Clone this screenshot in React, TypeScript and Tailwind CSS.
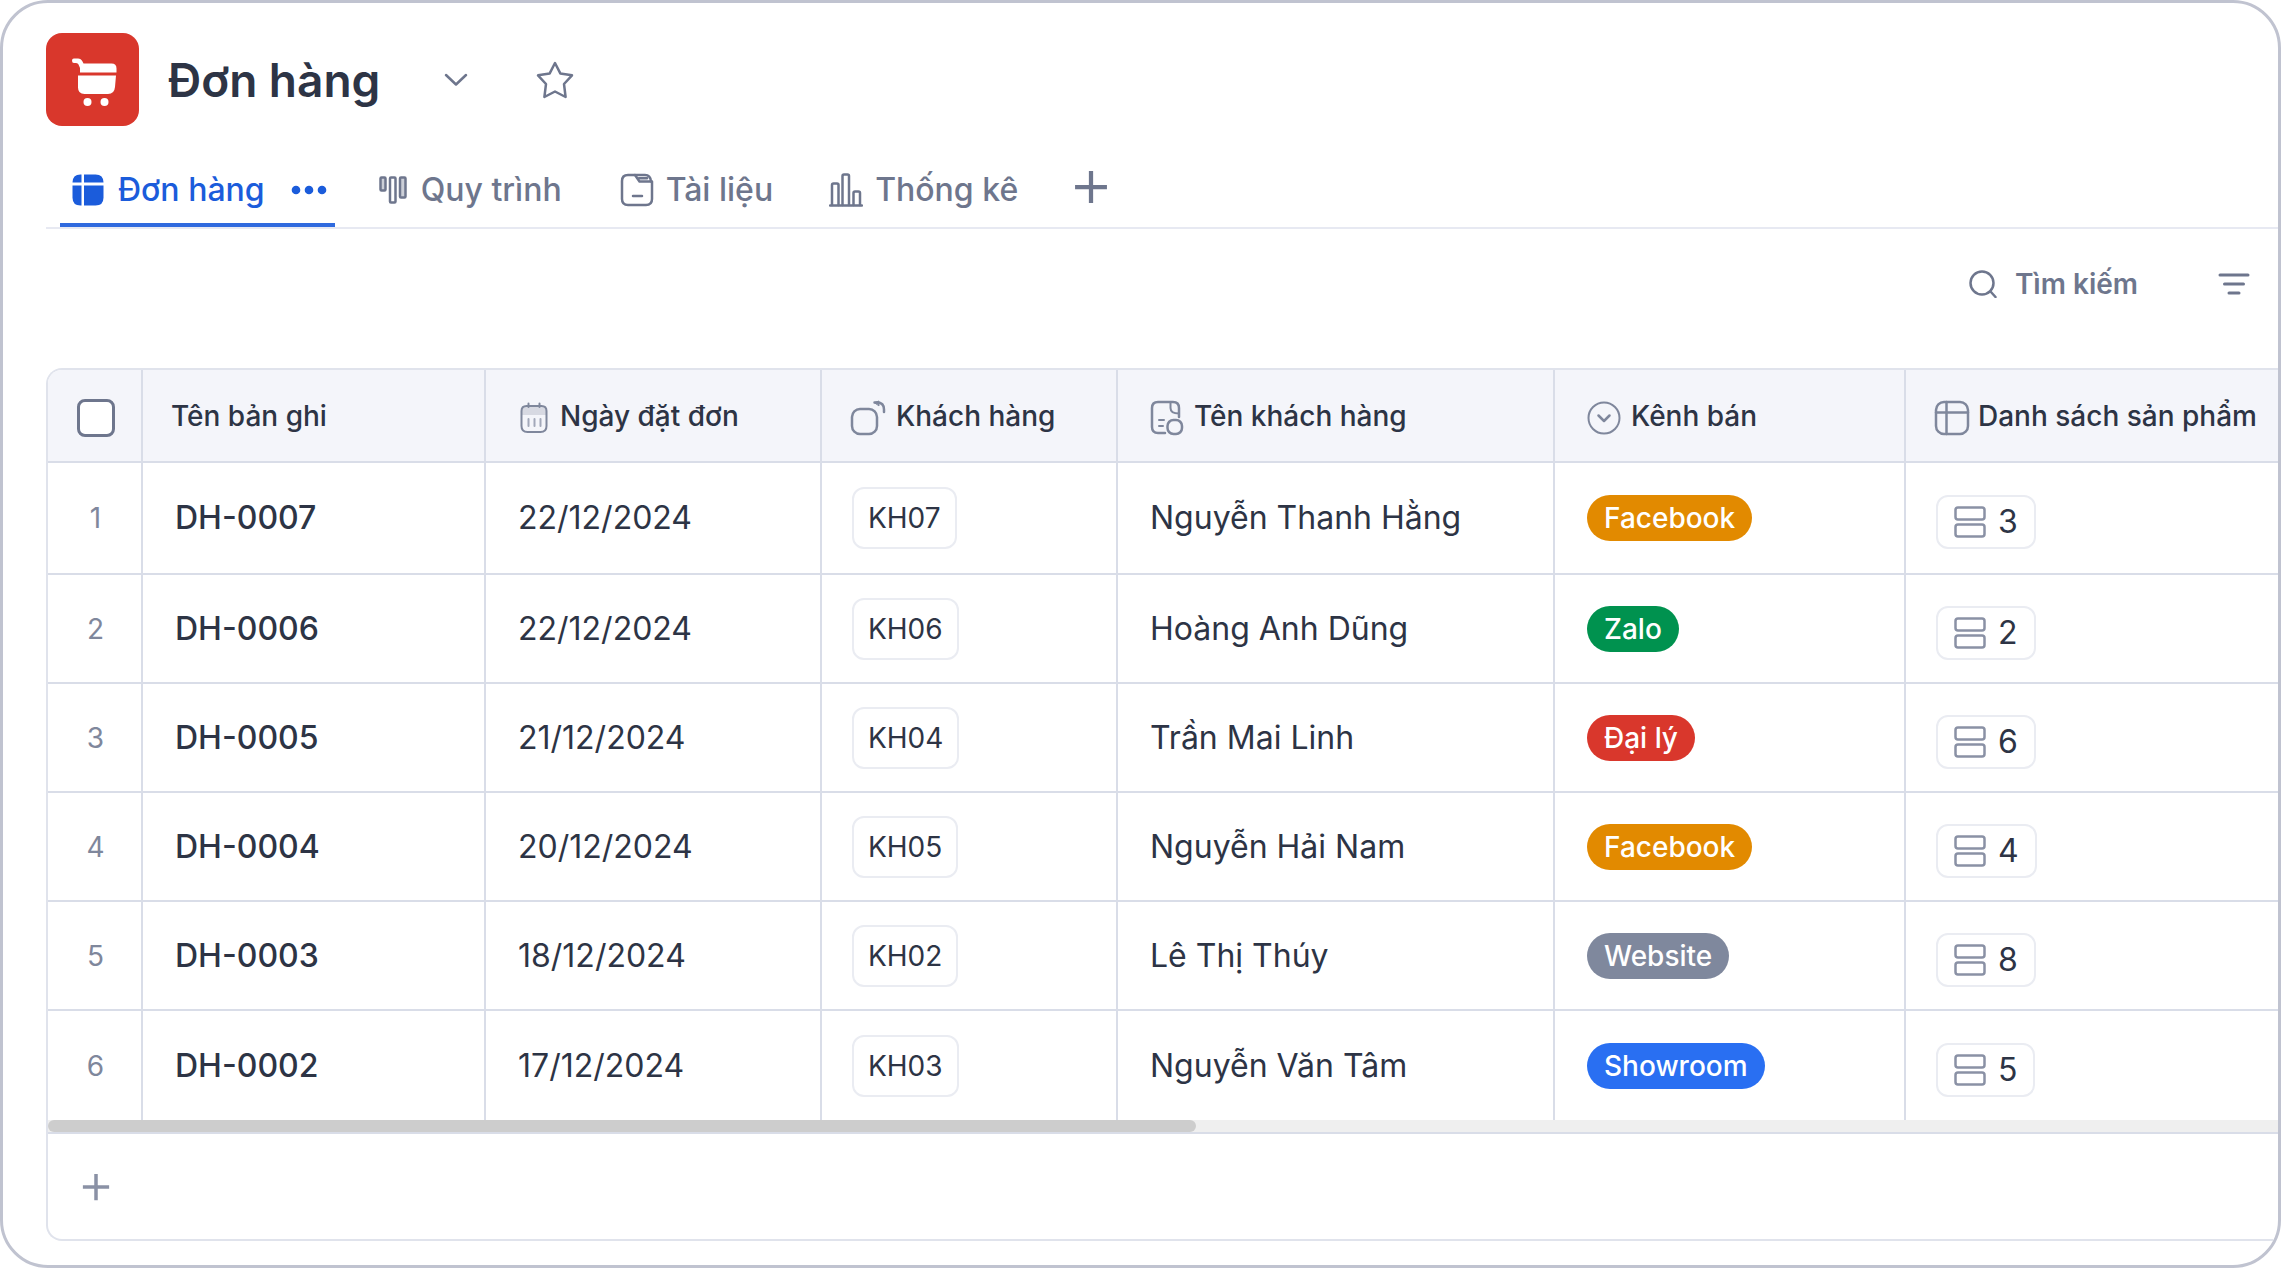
import React from "react";

type IconProps = { className?: string };

function Icon({ className, children, box = "0 0 32 32" }: IconProps & { children: React.ReactNode; box?: string }) {
  return (
    <svg
      className={className}
      viewBox={box}
      fill="none"
      stroke="currentColor"
      strokeWidth={2.5}
      strokeLinecap="round"
      strokeLinejoin="round"
      aria-hidden="true"
    >
      {children}
    </svg>
  );
}

const CartIcon = ({ className }: IconProps) => (
  <svg className={className} viewBox="0 0 45 48" fill="currentColor" aria-hidden="true">
    <path d="M2 0.500H6Q9 0.500 10.500 3.500L11.500 5.500H39.500Q44.500 5.500 44.500 10.500V14.500H8V10L6.500 6.500Q6 5 4 5H2Q0 5 0 2.700T2 0.500Z" />
    <path d="M6 17.500H44L43 29Q42.400 36 36 36H12.500Q6 36 6 29.500Z" />
    <circle cx="15.500" cy="44" r="4" />
    <circle cx="32.500" cy="44" r="4" />
  </svg>
);

const TableSolidIcon = ({ className }: IconProps) => (
  <svg className={className} viewBox="0 0 32 32" fill="currentColor" aria-hidden="true">
    <path d="M9.500 0.500V8.500H0.500Q0.500 0.500 8.500 0.500Z" />
    <path d="M12 0.500h11.500q8 0 8 8H12Z" />
    <path d="M0.500 11.500h9v20h-1q-8 0-8-8Z" />
    <path d="M12 11.500h19.500v12q0 8-8 8H12Z" />
  </svg>
);

const BoardIcon = ({ className }: IconProps) => (
  <Icon className={className} box="0 0 28 28">
    <rect x="1.500" y="1.500" width="5" height="13" rx="1" fill="currentColor" fillOpacity="0.350" />
    <rect x="11" y="1.500" width="5.500" height="25" rx="1" />
    <rect x="21" y="1.500" width="5.500" height="20" rx="1" fill="currentColor" fillOpacity="0.350" />
  </Icon>
);

const DocIcon = ({ className }: IconProps) => (
  <Icon className={className} box="0 0 34 34">
    <path d="M2 8Q2 2 8 2H15L19.500 8.500H32V26Q32 32 26 32H8Q2 32 2 26Z" />
    <path d="M15 2H25Q30.500 2 31 8.500M19 5.200H27" />
    <path d="M13 23H22" />
  </Icon>
);

const ChartIcon = ({ className }: IconProps) => (
  <Icon className={className} box="0 0 34 34">
    <path d="M1 32.500H33" />
    <path d="M3 32V12Q3 10.500 4.500 10.500H8Q9.500 10.500 9.500 12V32" />
    <path d="M13.500 32V3Q13.500 1.500 15 1.500H18.500Q20 1.500 20 3V32" />
    <path d="M24.500 32V20Q24.500 18.500 26 18.500H29.500Q31 18.500 31 20V32" />
  </Icon>
);

const PlusIcon = ({ className }: IconProps) => (
  <Icon className={className}>
    <path d="M16 1V31M1 16H31" strokeWidth={4} strokeLinecap="butt" />
  </Icon>
);

const ChevronIcon = ({ className }: IconProps) => (
  <Icon className={className} box="0 0 24 14">
    <path d="M2 2L12 11.500L22 2" />
  </Icon>
);

const StarIcon = ({ className }: IconProps) => (
  <Icon className={className} box="0 0 38 38">
    <path d="M19 2L24.300 12.400L36 14.300L28 23L29.600 36L19 30.500L8.400 36L10 23L2 14.300L13.700 12.400Z" />
  </Icon>
);

const SearchIcon = ({ className }: IconProps) => (
  <Icon className={className} box="0 0 28 28">
    <circle cx="13" cy="13" r="11.500" />
    <path d="M21.500 21.500L26.500 27" />
  </Icon>
);

const FilterIcon = ({ className }: IconProps) => (
  <Icon className={className} box="0 0 32 24">
    <path d="M2 3H30M6.500 12H25.500M11 21H21" strokeWidth={3} />
  </Icon>
);

const DotsIcon = ({ className }: IconProps) => (
  <svg className={className} viewBox="0 0 36 10" fill="currentColor" aria-hidden="true">
    <circle cx="5" cy="5" r="4.300" />
    <circle cx="18" cy="5" r="4.300" />
    <circle cx="31" cy="5" r="4.300" />
  </svg>
);

const CalendarIcon = ({ className }: IconProps) => (
  <Icon className={className} box="0 0 28 32">
    <path d="M1.500 9Q1.500 4 6.500 4H21.500Q26.500 4 26.500 9V24Q26.500 30 20.500 30H7.500Q1.500 30 1.500 24ZM8.500 1.500V5M19.500 1.500V5" strokeWidth={2} />
    <path d="M2 4.500H26V13H2Z" fill="currentColor" fillOpacity="0.250" stroke="none" />
    <path d="M8.500 17V24M14.500 17V24M20.500 17V24" strokeWidth={2} strokeOpacity="0.700" />
  </Icon>
);

const LinkIcon = ({ className }: IconProps) => (
  <Icon className={className} box="0 0 36 36">
    <rect x="2" y="9" width="25" height="25" rx="8" />
    <path d="M24.500 2.500H27Q34 2.500 34 9.500V12" />
    <path d="M24.500 2.500L29 1V5.500Z" fill="currentColor" strokeWidth={1} />
  </Icon>
);

const LookupIcon = ({ className }: IconProps) => (
  <Icon className={className} box="0 0 34 36">
    <path d="M15 33H8Q2 33 2 27V8Q2 2 8 2H23Q29 2 29 8V17" />
    <path d="M20.500 2V8Q20.500 13.500 29 13.500M9 20H14M9 26H13" strokeWidth={2} />
    <rect x="17.500" y="20" width="14.500" height="14" rx="6" />
  </Icon>
);

const SelectIcon = ({ className }: IconProps) => (
  <Icon className={className} box="0 0 34 34">
    <circle cx="17" cy="17" r="15.500" strokeWidth={2} />
    <path d="M11.500 14.500L17 20L22.500 14.500" />
  </Icon>
);

const TableIcon = ({ className }: IconProps) => (
  <Icon className={className} box="0 0 36 36">
    <rect x="2" y="2" width="32" height="32" rx="8" />
    <path d="M2 12.500H34M12.500 2V34" />
  </Icon>
);

const RowsIcon = ({ className }: IconProps) => (
  <Icon className={className}>
    <rect x="1.500" y="1.500" width="29" height="12" rx="2.500" />
    <rect x="1.500" y="18.500" width="29" height="12" rx="2.500" />
  </Icon>
);

const channels = {
  Facebook: "bg-[#e28a00]",
  Zalo: "bg-[#00924f]",
  "Đại lý": "bg-[#d9372c]",
  Website: "bg-[#7f889d]",
  Showroom: "bg-[#296ff2]",
} as const;

type Order = {
  id: string;
  date: string;
  customer: string;
  name: string;
  channel: keyof typeof channels;
  items: number;
};

const orders: Order[] = [
  { id: "DH-0007", date: "22/12/2024", customer: "KH07", name: "Nguyễn Thanh Hằng", channel: "Facebook", items: 3 },
  { id: "DH-0006", date: "22/12/2024", customer: "KH06", name: "Hoàng Anh Dũng", channel: "Zalo", items: 2 },
  { id: "DH-0005", date: "21/12/2024", customer: "KH04", name: "Trần Mai Linh", channel: "Đại lý", items: 6 },
  { id: "DH-0004", date: "20/12/2024", customer: "KH05", name: "Nguyễn Hải Nam", channel: "Facebook", items: 4 },
  { id: "DH-0003", date: "18/12/2024", customer: "KH02", name: "Lê Thị Thúy", channel: "Website", items: 8 },
  { id: "DH-0002", date: "17/12/2024", customer: "KH03", name: "Nguyễn Văn Tâm", channel: "Showroom", items: 5 },
];

const columns = [
  { label: "Ngày đặt đơn", icon: <CalendarIcon className="h-8 w-7" />, pad: "pl-8.5", gap: "gap-3" },
  { label: "Khách hàng", icon: <LinkIcon className="size-9" />, pad: "pl-7", gap: "gap-2.5" },
  { label: "Tên khách hàng", icon: <LookupIcon className="h-9 w-8.5" />, pad: "pl-8", gap: "gap-2.5" },
  { label: "Kênh bán", icon: <SelectIcon className="size-8.5" />, pad: "pl-8", gap: "gap-2.5" },
  { label: "Danh sách sản phẩm", icon: <TableIcon className="size-9" />, pad: "pl-7", gap: "gap-2" },
];

export default function App() {
  return (
    <main className="flex min-h-screen flex-col overflow-hidden rounded-[48px] border-3 border-[#c0c3d0] bg-white pb-6 pl-[43px] pt-[30px] font-['Inter',sans-serif] text-[#2d3445]">
      <header className="flex items-center">
        <div className="flex size-[93px] items-center justify-center rounded-2xl bg-[#d9372c] pl-1 pt-1 text-white">
          <CartIcon className="h-12 w-[45px]" />
        </div>
        <h1 className="ml-[29px] text-[46px] leading-[60px] font-semibold">Đơn hàng</h1>
        <button aria-label="Mở danh sách" className="ml-16 text-[#6e768d]">
          <ChevronIcon className="h-3.5 w-6" />
        </button>
        <button aria-label="Yêu thích" className="ml-17 text-[#6e768d]">
          <StarIcon className="size-[38px]" />
        </button>
      </header>

      <nav className="mt-[34px] flex h-[69px] border-b-2 border-[#e7e9f2] pl-3.5 text-[32px] font-medium text-[#6e768d]">
        <div className="flex items-center border-b-4 border-[#2f6ade] pb-1 pl-3 pr-2 text-[#1b5cdb]">
          <a href="#don-hang" aria-current="page" className="flex items-center gap-3.5">
            <TableSolidIcon className="size-8" />
            Đơn hàng
          </a>
          <button aria-label="Tùy chọn" className="ml-6.5">
            <DotsIcon className="h-2.5 w-9" />
          </button>
        </div>
        <a href="#quy-trinh" className="ml-11 flex items-center gap-3.5 pb-2">
          <BoardIcon className="size-7" />
          Quy trình
        </a>
        <a href="#tai-lieu" className="ml-14.5 flex items-center gap-3 pb-2">
          <DocIcon className="size-8.5" />
          Tài liệu
        </a>
        <a href="#thong-ke" className="ml-14 flex items-center gap-3 pb-2">
          <ChartIcon className="size-8.5" />
          Thống kê
        </a>
        <button aria-label="Thêm trang" className="ml-14 pb-3.5">
          <PlusIcon className="size-8.5" />
        </button>
      </nav>

      <div className="mb-[60px] mt-[31px] flex h-12 items-center justify-end gap-20 pr-7 text-[28px] font-semibold text-[#6e768d]">
        <button className="flex items-center gap-4.5">
          <SearchIcon className="size-7" />
          Tìm kiếm
        </button>
        <button aria-label="Bộ lọc">
          <FilterIcon className="h-6 w-8" />
        </button>
      </div>

      <section className="flex grow flex-col overflow-hidden rounded-l-2xl border-2 border-r-0 border-[#e0e3ec]">
        <table className="w-full table-fixed border-separate border-spacing-0">
          <colgroup>
            <col className="w-[95px]" />
            <col className="w-[343px]" />
            <col className="w-[336px]" />
            <col className="w-[296px]" />
            <col className="w-[437px]" />
            <col className="w-[351px]" />
            <col />
          </colgroup>
          <thead className="bg-[#f4f5fa] text-left text-[28px] leading-9 [&_th]:border-b-2 [&_th]:border-r-2 [&_th]:border-[#d9dde8] [&_th]:font-medium [&_th:last-child]:border-r-0">
            <tr className="h-[93px]">
              <th scope="col" className="pl-0.5 pt-1">
                <input
                  type="checkbox"
                  aria-label="Chọn tất cả"
                  className="mx-auto block size-[38px] appearance-none rounded-lg border-[3px] border-[#6e768d] bg-white"
                />
              </th>
              <th scope="col" className="pl-7">Tên bản ghi</th>
              {columns.map((c) => (
                <th key={c.label} scope="col" className={c.pad}>
                  <div className={"flex items-center whitespace-nowrap " + c.gap}>
                    <span className="pt-1 text-[#7f879c]">{c.icon}</span>
                    {c.label}
                  </div>
                </th>
              ))}
            </tr>
          </thead>
          <tbody className="text-[32px] leading-10 [&_td]:border-b-2 [&_td]:border-r-2 [&_td]:border-[#d9dde8] [&_td:last-child]:border-r-0 [&_tr:last-child_td]:border-b-0">
            {orders.map((o, i) => (
              <tr key={o.id} className={i === 0 ? "h-28" : "h-[109px]"}>
                <td className="pl-0.5 text-center text-[28px] text-[#7f879c]">{i + 1}</td>
                <td className="pl-8 font-medium">{o.id}</td>
                <td className="pl-8">{o.date}</td>
                <td className="pl-7.5">
                  <span className="inline-flex h-[62px] items-center rounded-xl border-2 border-[#eaecf2] px-3.5 align-middle text-[28px]">
                    {o.customer}
                  </span>
                </td>
                <td className="pl-8">{o.name}</td>
                <td className="pl-8">
                  <span
                    className={
                      "inline-flex h-[46px] items-center rounded-full px-[17px] align-middle text-[28px] font-medium text-white " +
                      channels[o.channel]
                    }
                  >
                    {o.channel}
                  </span>
                </td>
                <td className="pl-7.5 pt-2">
                  <span className="inline-flex h-[54px] items-center gap-3 rounded-xl border-2 border-[#eaecf2] px-4 align-middle">
                    <RowsIcon className="size-8 text-[#8a91a5]" />
                    {o.items}
                  </span>
                </td>
              </tr>
            ))}
          </tbody>
        </table>
        <div className="border-b-2 border-[#d9dde8] bg-[#efefef]">
          <div className="h-3 w-[51.5%] rounded-full bg-[#cdcdcd]" />
        </div>
        <div className="flex grow items-center pl-8.5 text-[#8a91a5]">
          <button aria-label="Thêm bản ghi">
            <PlusIcon className="size-7" />
          </button>
        </div>
      </section>
    </main>
  );
}
